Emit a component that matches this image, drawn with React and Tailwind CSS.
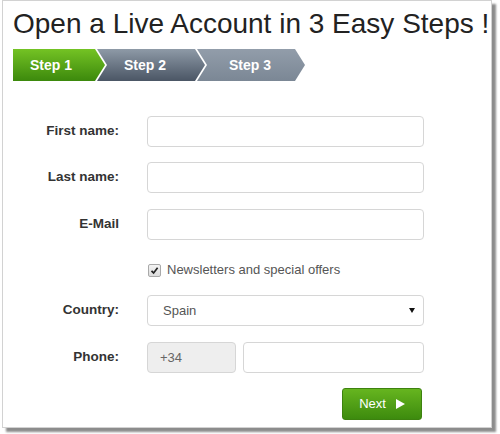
import React from "react";

const steps = [
  {
    label: "Step 1",
    cls: "w-[92px] pl-[17px] bg-gradient-to-b from-[#74c324] to-[#3c890c] [clip-path:polygon(0_0,82px_0,92px_50%,82px_100%,0_100%)]",
  },
  {
    label: "Step 2",
    cls: "w-[108px] -ml-[8px] pl-[27px] bg-gradient-to-b from-[#8e9aa7] to-[#4b5665] [clip-path:polygon(0_0,98px_0,108px_50%,98px_100%,0_100%,10px_50%)]",
  },
  {
    label: "Step 3",
    cls: "w-[108px] -ml-[8px] pl-[32px] bg-gradient-to-b from-[#929daa] to-[#7b8795] [clip-path:polygon(0_0,98px_0,108px_50%,98px_100%,0_100%,10px_50%)]",
  },
];

function Row({ label, children, className = "" }) {
  return (
    <div className={"flex items-center h-[31px] " + className}>
      <div className="w-[106px] text-right text-[13.5px] font-bold text-[#333]">{label}</div>
      <div className="ml-[28px] w-[277px] h-full flex">{children}</div>
    </div>
  );
}

function Input() {
  return <div className="w-full h-full bg-white border border-[#d6d6d6] rounded-[4px]" />;
}

export default function App() {
  return (
    <div
      className="w-[500px] h-[434px] bg-white overflow-hidden"
      style={{ fontFamily: '"Liberation Sans", Arial, sans-serif' }}
    >
      <div className="ml-[2px] w-[490px] h-[428px] bg-white border border-[#d2d2d2] shadow-[4px_4px_2px_rgba(0,0,0,0.45)] pl-[10px] pt-[9px]">
        <h1 className="text-[28px] leading-none text-[#222] whitespace-nowrap">
          Open a Live Account in 3 Easy Steps !
        </h1>

        <div className="flex mt-[11px] h-[32px]">
          {steps.map((s) => (
            <div key={s.label} className={"h-full flex items-center text-white font-bold text-[14px] " + s.cls}>
              {s.label}
            </div>
          ))}
        </div>

        <Row label="First name:" className="mt-[35px]">
          <Input />
        </Row>
        <Row label="Last name:" className="mt-[15px]">
          <Input />
        </Row>
        <Row label="E-Mail" className="mt-[16px]">
          <Input />
        </Row>

        <div className="flex items-center h-[20px] mt-[20px] pl-[135px]">
          <span className="w-[13px] h-[13px] border border-[#a9a9a9] rounded-[2px] bg-gradient-to-b from-[#f4f4f4] to-[#dcdcdc] flex items-center justify-center">
            <svg width="9" height="9" viewBox="0 0 9 9">
              <path d="M1.5 4.8 L3.6 6.9 L7.6 1.8" fill="none" stroke="#222" strokeWidth="1.7" />
            </svg>
          </span>
          <span className="ml-[6px] text-[13px] text-[#555]">Newsletters and special offers</span>
        </div>

        <Row label="Country:" className="mt-[15px]">
          <div className="w-full h-full bg-white border border-[#d6d6d6] rounded-[4px] flex items-center justify-between pl-[15px] pr-[8px]">
            <span className="text-[13px] text-[#555]">Spain</span>
            <svg width="6" height="5" viewBox="0 0 6 5">
              <path d="M0 0 H6 L3 5 Z" fill="#111" />
            </svg>
          </div>
        </Row>

        <Row label="Phone:" className="mt-[16px]">
          <div className="w-[89px] h-full bg-[#eeeeee] border border-[#d6d6d6] rounded-[4px] flex items-center pl-[12px] text-[13px] text-[#666]">
            +34
          </div>
          <div className="ml-[7px] flex-1 h-full">
            <Input />
          </div>
        </Row>

        <div className="flex mt-[15px] pl-[329px]">
          <button className="w-[80px] h-[32px] rounded-[3px] border border-[#3d820f] bg-gradient-to-b from-[#66b51f] to-[#3d8b0e] flex items-center justify-center gap-[10px] text-white text-[13px]">
            <span>Next</span>
            <svg width="9" height="10" viewBox="0 0 9 10">
              <path d="M0 0 L9 5 L0 10 Z" fill="#fff" />
            </svg>
          </button>
        </div>
      </div>
    </div>
  );
}
